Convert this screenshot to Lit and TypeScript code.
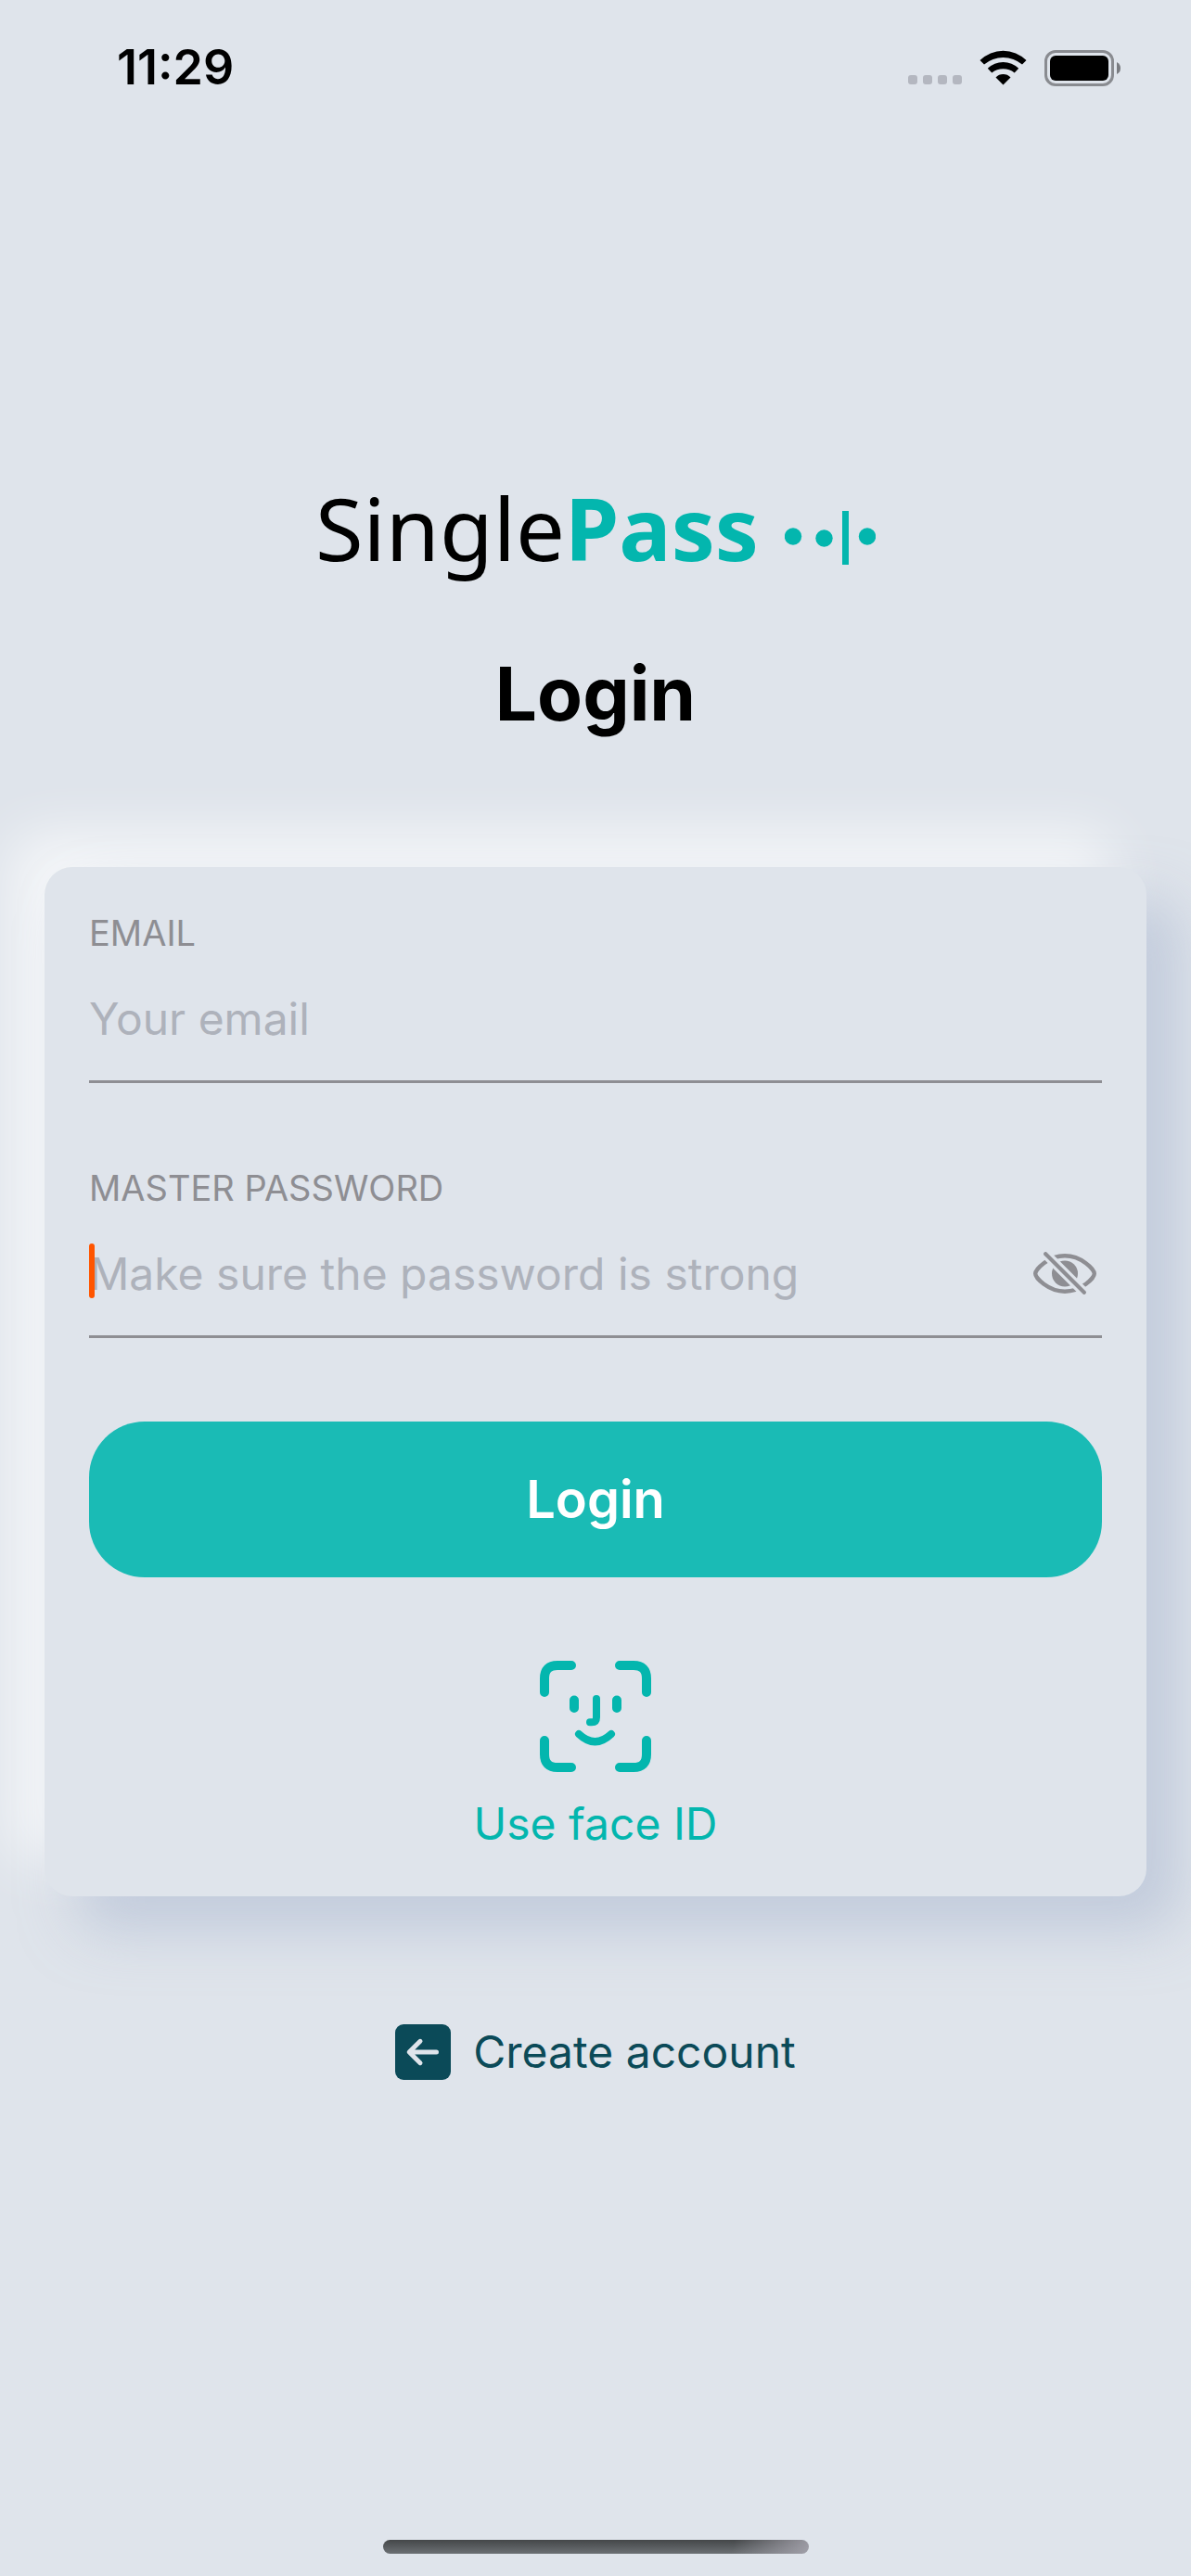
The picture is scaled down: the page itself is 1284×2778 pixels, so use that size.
import { LitElement, html, css } from "lit";
import { customElement, state } from "lit/decorators.js";

@customElement("status-bar")
class StatusBar extends LitElement {
  static styles = css`
    :host {
      display: flex;
      align-items: center;
      justify-content: space-between;
      height: 146px;
      padding: 0 76px 0 126px;
    }
    .time {
      font-size: 52px;
      font-weight: 600;
      line-height: 60px;
    }
    .indicators {
      display: flex;
      align-items: center;
      gap: 19px;
    }
    svg {
      display: block;
    }
  `;

  render() {
    return html`
      <span class="time">11:29</span>
      <div class="indicators">
        <svg width="58" height="38" viewBox="0 0 58 38" fill="#b4b7c0" aria-hidden="true">
          <rect x="0" y="27" width="10" height="10" rx="3" />
          <rect x="16" y="27" width="10" height="10" rx="3" />
          <rect x="32" y="27" width="10" height="10" rx="3" />
          <rect x="48" y="27" width="10" height="10" rx="3" />
        </svg>
        <svg width="51" height="38" viewBox="0 0 51 38" aria-hidden="true">
          <path d="M.5 11A35.5 35.5 0 0 1 50.5 11L46 15.5A31.8 31.8 0 0 0 5 15.5Z" />
          <path d="M8.8 19.8A24 24 0 0 1 42.2 19.8L37.7 24.4A20 20 0 0 0 13.3 24.4Z" />
          <path d="M17.5 29.4A11 11 0 0 1 33.5 29.4L25.5 37.5Z" />
        </svg>
        <svg width="82" height="39" viewBox="0 0 82 39" aria-hidden="true">
          <rect x="1.5" y="1.5" width="72" height="36" rx="10.5" fill="none" stroke="#898b90" stroke-width="3" />
          <rect x="6" y="6" width="63" height="27" rx="6" />
          <path d="M78 13Q82 15 82 19.5Q82 24 78 26Z" fill="#797b80" />
        </svg>
      </div>
    `;
  }
}

@customElement("brand-logo")
class BrandLogo extends LitElement {
  static styles = css`
    :host {
      display: flex;
      justify-content: center;
      align-items: flex-end;
      gap: 28px;
      font-family: "Noto Sans", "Open Sans", sans-serif;
      font-size: 94px;
      line-height: 120px;
    }
    .pass {
      color: #03b6ae;
      font-weight: 700;
    }
    .mark {
      display: block;
      padding-bottom: 20px;
    }
  `;

  render() {
    return html`
      <span>Single<span class="pass">Pass</span></span>
      <svg class="mark" width="98" height="58" viewBox="0 0 98 58" fill="#03b6ae" aria-hidden="true">
        <circle cx="9" cy="27.5" r="9.2" />
        <circle cx="42.5" cy="29.5" r="9.2" />
        <rect x="62" y="0" width="7" height="58" />
        <circle cx="89" cy="27.5" r="9.2" />
      </svg>
    `;
  }
}

@customElement("app-root")
class AppRoot extends LitElement {
  static styles = css`
    :host {
      display: flex;
      flex-direction: column;
      min-height: 100vh;
      box-sizing: border-box;
      padding-bottom: 24px;
      background: #dfe4eb;
      color: #000;
      font-family: Inter, "Liberation Sans", sans-serif;
    }
    main {
      display: flex;
      flex-direction: column;
      padding: 363px 48px 0;
    }
    h1 {
      margin: 69px 0 137px;
      text-align: center;
      font-size: 80px;
      font-weight: 700;
      line-height: 100px;
    }
    .card {
      display: flex;
      flex-direction: column;
      padding: 46px 48px 48px;
      border-radius: 30px;
      background: #dfe4eb;
      box-shadow:
        36px 36px 60px rgba(165, 180, 205, 0.5),
        -36px -36px 60px rgba(255, 255, 255, 0.7);
    }
    .field {
      margin-bottom: 88px;
    }
    .field label {
      display: block;
      color: #8e8e93;
      font-size: 38px;
      line-height: 50px;
    }
    .row {
      position: relative;
      display: flex;
      align-items: center;
      height: 134px;
      border-bottom: 3px solid #8e8e93;
    }
    input {
      flex: 1;
      min-width: 0;
      height: 100%;
      padding: 0;
      border: 0;
      outline: 0;
      background: none;
      color: #000;
      font: inherit;
      font-size: 48px;
      caret-color: #ff5500;
    }
    input::placeholder {
      color: #aeb2bb;
      opacity: 1;
    }
    .caret {
      position: absolute;
      left: 0;
      top: 35px;
      width: 6px;
      height: 59px;
      border-radius: 3px;
      background: #ff5500;
    }
    button {
      border: 0;
      background: none;
      font: inherit;
      cursor: pointer;
    }
    svg {
      display: block;
      flex: none;
    }
    .reveal {
      padding: 0 6px;
      color: #8e8e93;
    }
    .submit {
      height: 168px;
      margin-top: 2px;
      padding: 0;
      border-radius: 60px;
      background: #1abbb5;
      color: #fff;
      font-size: 56px;
      font-weight: 600;
    }
    .face {
      display: flex;
      flex-direction: column;
      align-items: center;
      align-self: center;
      gap: 26px;
      margin-top: 90px;
      padding: 0;
      color: #03b6ae;
      font-size: 48px;
      line-height: 60px;
    }
    .create {
      display: flex;
      align-items: center;
      align-self: center;
      gap: 24px;
      margin-top: 138px;
      color: #0b4a58;
      font-size: 48px;
      line-height: 60px;
      text-decoration: none;
    }
    .home {
      align-self: center;
      width: 459px;
      height: 15px;
      margin-top: auto;
      border-radius: 8px;
      background:
        linear-gradient(100deg, transparent 82%, rgba(170, 168, 178, 0.85) 100%),
        linear-gradient(#444749, #6c7074);
    }
  `;

  @state() private revealed = false;
  @state() private started = false;

  private onInput(event: Event) {
    this.started = (event.target as HTMLInputElement).value.length > 0;
  }

  render() {
    return html`
      <status-bar></status-bar>
      <main>
        <brand-logo></brand-logo>
        <h1>Login</h1>
        <form class="card" @submit=${(e: Event) => e.preventDefault()}>
          <div class="field">
            <label for="email">EMAIL</label>
            <div class="row">
              <input id="email" type="email" placeholder="Your email" />
            </div>
          </div>
          <div class="field">
            <label for="password">MASTER PASSWORD</label>
            <div class="row">
              <input
                id="password"
                type=${this.revealed ? "text" : "password"}
                placeholder="Make sure the password is strong"
                @input=${this.onInput}
              />
              ${this.started ? null : html`<span class="caret"></span>`}
              <button
                class="reveal"
                type="button"
                aria-label="Show password"
                aria-pressed=${this.revealed}
                @click=${() => (this.revealed = !this.revealed)}
              >
                <svg width="68" height="46" viewBox="0 0 68 46" fill="none" stroke="currentColor">
                  <mask id="slash-gap" maskUnits="userSpaceOnUse" x="0" y="0" width="68" height="46">
                    <rect width="68" height="46" fill="#fff" stroke="none" />
                    <path d="M9 -2L59 48" stroke="#000" stroke-width="10.5" />
                  </mask>
                  <g mask="url(#slash-gap)">
                    <path
                      d="M2.2 23.5C2.2 19 16 4.3 34 4.3S65.8 19 65.8 23.5S52 42.7 34 42.7S2.2 28 2.2 23.5Z"
                      stroke-width="4.4"
                    />
                    <circle cx="34" cy="23.5" r="14" fill="currentColor" stroke="none" />
                  </g>
                  <path d="M13.2 2.2L54.8 43.8" stroke-width="4.2" stroke-linecap="round" />
                </svg>
              </button>
            </div>
          </div>
          <button class="submit" type="submit">Login</button>
          <button class="face" type="button">
            <svg
              width="120"
              height="120"
              viewBox="0 0 120 120"
              fill="none"
              stroke="currentColor"
              stroke-width="10"
              stroke-linecap="round"
              aria-hidden="true"
            >
              <path d="M5 34V19Q5 5 19 5H34M86 5H101Q115 5 115 19V34M115 86V101Q115 115 101 115H86M34 115H19Q5 115 5 101V86" />
              <path d="M37 42.5V51M83 42.5V51" />
              <path d="M61 41V61Q61 66.3 56 66.3H54M42 79Q59.5 95.5 77 79" stroke-width="8" />
            </svg>
            <span>Use face ID</span>
          </button>
        </form>
        <a class="create" href="#create-account">
          <svg width="60" height="60" viewBox="0 0 60 60" aria-hidden="true">
            <rect width="60" height="60" rx="9" fill="#0b4a58" />
            <path
              d="M44.5 30H15.5M27 18.3L15.2 30L27 41.7"
              fill="none"
              stroke="#dfe4eb"
              stroke-width="5"
              stroke-linecap="round"
              stroke-linejoin="round"
            />
          </svg>
          <span>Create account</span>
        </a>
      </main>
      <div class="home"></div>
    `;
  }
}
